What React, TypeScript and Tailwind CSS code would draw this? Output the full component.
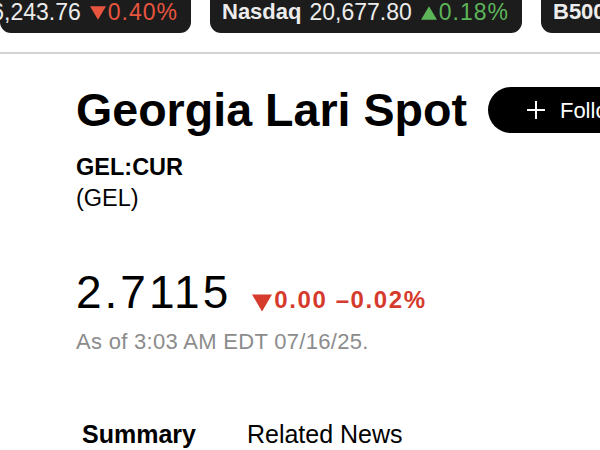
const tickers = [
  { name: "S&P 500", value: "6,243.76", change: "0.40%", up: false },
  { name: "Nasdaq", value: "20,677.80", change: "0.18%", up: true },
  { name: "B500", value: "", change: "", up: true },
];

function Triangle({ up, className }: { up: boolean; className: string }) {
  return (
    <svg viewBox="0 0 14 12" className={className} fill="currentColor">
      {up ? <path d="M7 0 L14 12 L0 12 Z" /> : <path d="M0 0 L14 0 L7 12 Z" />}
    </svg>
  );
}

function TickerPill({ t, className }: { t: (typeof tickers)[number]; className: string }) {
  return (
    <div className={`h-[33px] shrink-0 rounded-b-[11px] bg-[#1c1c1c] flex items-start pt-[1px] text-[23px] leading-[22px] text-[#ececec] ${className}`}>
      <span className="font-bold text-[22px] mr-[8px] whitespace-nowrap">{t.name}</span>
      {t.value && <span className="whitespace-nowrap">{t.value}</span>}
      {t.change && (
        <span className={`flex items-center ml-[9px] tracking-[1px] ${t.up ? "text-[#5db55a]" : "text-[#e8553f]"}`}>
          <Triangle up={t.up} className="w-[16px] h-[14px] mt-[1px] mr-[2px]" />
          {t.change}
        </span>
      )}
    </div>
  );
}

export default function App() {
  return (
    <div className="w-[600px] h-[450px] overflow-hidden bg-white font-['Liberation_Sans',Arial,sans-serif] text-black">
      <div className="flex gap-[19px]">
        <TickerPill t={tickers[0]} className="w-[191px] justify-end pr-[13px] overflow-hidden" />
        <TickerPill t={tickers[1]} className="w-[312px] pl-[12px]" />
        <TickerPill t={tickers[2]} className="w-[120px] pl-[12px]" />
      </div>
      <div className="h-[2px] bg-[#d2d2d2] mt-[19px]" />

      <div className="pl-[76px] pt-[33px]">
        <div className="flex items-center gap-[21px] whitespace-nowrap">
          <h1 className="text-[46.6px] leading-[46px] font-bold">Georgia Lari Spot</h1>
          <button className="h-[46px] rounded-full bg-black text-white flex items-center pl-[39px] pr-[28px] text-[22px] font-medium">
            <svg viewBox="0 0 18 18" className="w-[18px] h-[18px] mr-[15px]" stroke="currentColor" strokeWidth="2">
              <path d="M9 0 V18 M0 9 H18" />
            </svg>
            Follow
          </button>
        </div>

        <div className="mt-[20px] text-[23.5px] leading-[28px] font-bold">GEL:CUR</div>
        <div className="text-[23.5px] leading-[35px]">(GEL)</div>

        <div className="mt-[52px] flex items-baseline">
          <span className="text-[46px] leading-[48px] tracking-[3px]">2.7115</span>
          <span className="ml-[21px] flex items-baseline text-[24px] font-bold tracking-[1.6px] text-[#d63a2c]">
            <Triangle up={false} className="w-[20px] h-[18px] mr-[2px] self-center translate-y-[3px]" />
            0.00 –0.02%
          </span>
        </div>
        <div className="mt-[10px] text-[22px] leading-[28px] tracking-[0.3px] text-[#8c8c8c]">As of 3:03 AM EDT 07/16/25.</div>

        <div className="mt-[64px] flex pl-[6px] text-[25px] leading-[28px]">
          <span className="font-bold">Summary</span>
          <span className="ml-[51px]">Related News</span>
        </div>
      </div>
    </div>
  );
}
